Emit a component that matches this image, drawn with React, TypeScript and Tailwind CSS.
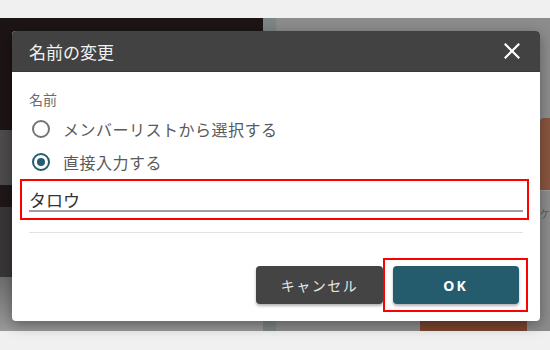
import React from "react";

const jp = { fontFamily: '"Noto Sans CJK JP", "Noto Sans", sans-serif' };

function Radio({ checked }: { checked: boolean }) {
  return (
    <span
      className={
        "flex h-[18px] w-[18px] shrink-0 items-center justify-center rounded-full border-2 " +
        (checked ? "border-[#245e70]" : "border-[#757575]")
      }
    >
      {checked && <span className="h-[8px] w-[8px] rounded-full bg-[#245e70]" />}
    </span>
  );
}

export default function App() {
  return (
    <div className="relative h-[350px] w-[550px] overflow-hidden bg-[#f0f0f0]" style={jp}>
      {/* dimmed background app */}
      <div className="mt-[18px] flex h-[313px]">
        <div className="flex w-[263px] flex-col">
          <div className="h-[112px] bg-[#1c1415]" />
          <div className="h-[55px] bg-[#4d4b4b]" />
          <div className="h-[22px] bg-[#1f1717]" />
          <div className="h-[70px] bg-[#383636]" />
          <div className="flex-1 bg-gradient-to-b from-[#6e6e6e] to-[#9a9a9a]" />
        </div>
        <div className="flex w-[13px] flex-col bg-[#7d8484]" />
        <div className="flex flex-1 flex-col bg-[#8c8c8c]">
          <div className="h-[100px]" />
          <div className="flex justify-end">
            <div className="h-[72px] w-[10px] rounded-tl-[4px] bg-[#875540]" />
          </div>
          <div className="h-px bg-[#9a9a9a]" />
          <div className="flex justify-end pt-[18px]">
            <span className="text-[10px] leading-none text-[#5a5a5a]">1ケ</span>
          </div>
          <div className="flex-1" />
          <div className="flex h-[10px] pl-[144px]">
            <div className="w-[107px] bg-[#7a4530]" />
          </div>
        </div>
      </div>

      {/* dialog */}
      <div className="absolute left-[12px] top-[31px] flex h-[290px] w-[528px] flex-col overflow-hidden rounded-[4px] bg-white shadow-[0_4px_14px_rgba(0,0,0,0.35)]">
        <div className="flex h-[41px] shrink-0 items-center justify-between border-b border-[#3a3a3a] bg-[#424242] pl-[17px] pr-[20px]">
          <span className="text-[17px] leading-none text-[#f2f2f2]">名前の変更</span>
          <svg width="16" height="16" viewBox="0 0 16 16">
            <path d="M1.5 1.5 L14.5 14.5 M14.5 1.5 L1.5 14.5" stroke="#ffffff" strokeWidth="2.2" strokeLinecap="square" />
          </svg>
        </div>

        <div className="flex flex-1 flex-col px-[17px] pt-[20px]">
          <div className="text-[14px] leading-none text-[#6b6b6b]">名前</div>
          <div className="mt-[13px] flex flex-col gap-[13px] pl-[3px]">
            <label className="flex h-[20px] items-center gap-[13px]">
              <Radio checked={false} />
              <span className="text-[16px] leading-none tracking-[0.5px] text-[#5a5a5a]">メンバーリストから選択する</span>
            </label>
            <label className="flex h-[20px] items-center gap-[13px]">
              <Radio checked={true} />
              <span className="text-[16px] leading-none tracking-[0.5px] text-[#5a5a5a]">直接入力する</span>
            </label>
          </div>

          <div className="ml-[-9px] mr-[-6px] mt-[7px] h-[41px] border-2 border-[#ff0000] pl-[7px] pr-[4px]">
            <div className="flex h-[31px] items-center border-b-2 border-[#9e9e9e]">
              <span className="mt-[7px] text-[17px] leading-none text-[#333333]">タロウ</span>
            </div>
          </div>

          <div className="mt-[12px] h-px bg-[#e2e2e2]" />

          <div className="mr-[-5px] mt-[25px] flex justify-end">
            <button className="mt-[8px] h-[38px] w-[127px] rounded-[4px] bg-[#444444] text-[14px] tracking-[1.5px] text-[#e6e6e6] shadow-[0_2px_3px_rgba(0,0,0,0.3)]">
              キャンセル
            </button>
            <div className="flex h-[54px] w-[145px] items-center justify-center border-2 border-[#ff0000]">
              <button
                className="h-[38px] w-[126px] rounded-[4px] bg-[#245c6e] text-[14px] font-bold tracking-[2px] text-white shadow-[0_2px_3px_rgba(0,0,0,0.3)]"
                style={{ fontFamily: '"Noto Sans", sans-serif' }}
              >
                OK
              </button>
            </div>
          </div>
        </div>
      </div>
    </div>
  );
}
